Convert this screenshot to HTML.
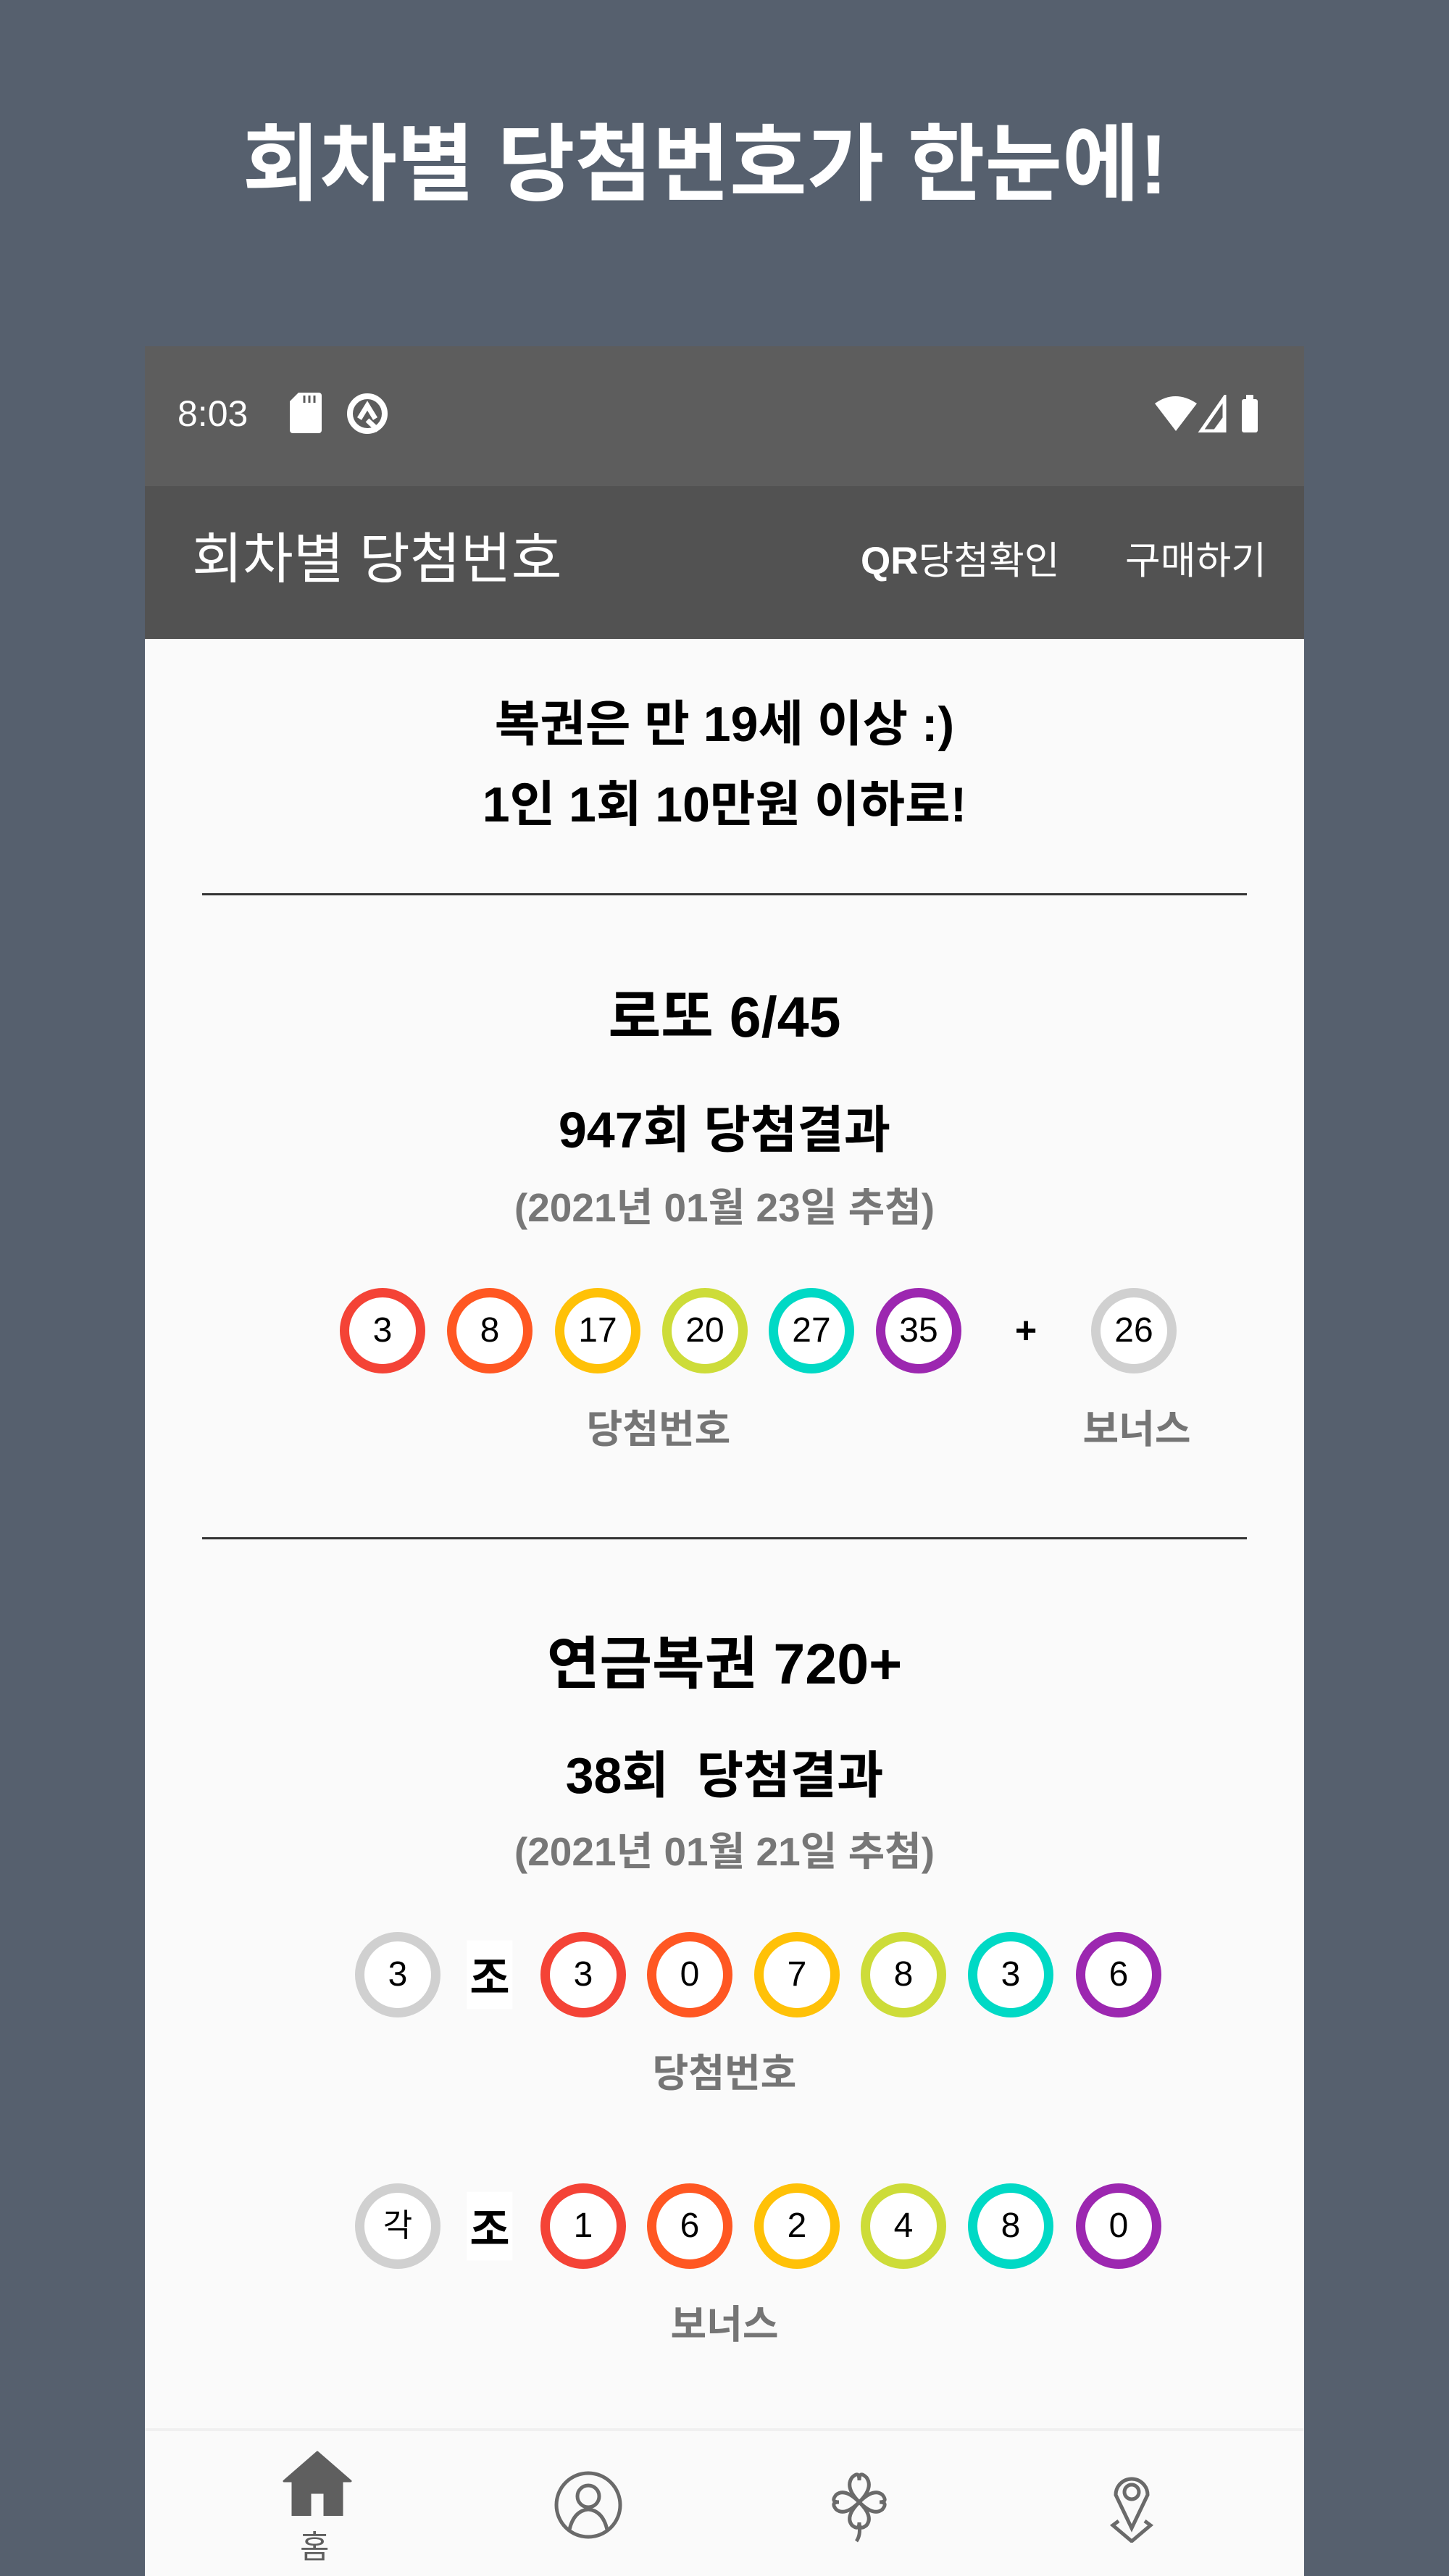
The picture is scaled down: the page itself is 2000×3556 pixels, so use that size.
<!DOCTYPE html>
<html><head><meta charset="utf-8"><style>
*{margin:0;padding:0;box-sizing:border-box}
body{width:2000px;height:3556px;background:#56606e;position:relative;overflow:hidden;font-family:"Liberation Sans","Noto Sans CJK KR",sans-serif}
.a{position:absolute;white-space:nowrap}
.c{position:absolute;left:200px;width:1600px;text-align:center;white-space:nowrap}
.ball{position:absolute;width:118px;height:118px;border-radius:50%;border:13px solid;background:#fff;text-align:center;line-height:92px;font-size:48px;color:#000;transform:translate(-50%,-50%)}
.r{border-color:#f44336}.o{border-color:#ff5722}.y{border-color:#ffc107}.l{border-color:#cddc39}.t{border-color:#00d9c5}.p{border-color:#9c27b0}.g{border-color:#d0d0d0}
.lbl{position:absolute;font-size:54px;color:#757575;font-weight:bold;transform:translate(-50%,-50%)}
</style></head><body>
<div class="a" style="left:-27px;width:2000px;text-align:center;top:160px;font-size:116px;font-weight:bold;color:#fff;line-height:134px">회차별 당첨번호가 한눈에!</div>
<div class="a" style="left:200px;top:478px;width:1600px;height:193px;background:#5d5d5d"></div>
<div class="a" style="left:245px;top:540px;font-size:50px;color:#fff;line-height:62px">8:03</div>
<svg class="a" style="left:400px;top:542px" width="44" height="56" viewBox="0 0 44 56"><path d="M12 0H40a4 4 0 0 1 4 4V52a4 4 0 0 1-4 4H4a4 4 0 0 1-4-4V12z" fill="#fff"/><path d="M20 4v10M27 4v10M34 4v10" stroke="#5d5d5d" stroke-width="3"/></svg>
<svg class="a" style="left:478px;top:542px" width="58" height="58" viewBox="0 0 58 58"><circle cx="29" cy="29" r="24" fill="none" stroke="#fff" stroke-width="8"/><path d="M18 36L29 18L40 36M29 38L44 52" fill="none" stroke="#fff" stroke-width="7"/></svg>
<svg class="a" style="left:1594px;top:545px" width="150" height="52" viewBox="0 0 150 52"><path d="M0 12Q28 -8 58 12L29 50z" fill="#fff"/><path d="M64 50L96 4V50z" fill="none" stroke="#fff" stroke-width="5"/><path d="M80 50L96 28V50z" fill="#fff"/><rect x="120" y="6" width="22" height="46" rx="3" fill="#fff"/><rect x="126" y="0" width="10" height="8" fill="#fff"/></svg>
<div class="a" style="left:200px;top:671px;width:1600px;height:211px;background:#525252"></div>
<div class="a" style="left:265px;top:728px;font-size:76px;color:#fff;line-height:90px">회차별 당첨번호</div>
<div class="a" style="left:1188px;top:744px;font-size:53px;color:#fff;line-height:62px"><b>QR</b>당첨확인</div>
<div class="a" style="left:1553px;top:744px;font-size:53px;color:#fff;line-height:62px">구매하기</div>
<div class="a" style="left:200px;top:882px;width:1600px;height:2470px;background:#fafafa"></div>
<div class="c" style="top:962px;font-size:68px;font-weight:bold;line-height:76px">복권은 만 19세 이상 :)</div>
<div class="c" style="top:1073px;font-size:68px;font-weight:bold;line-height:76px">1인 1회 10만원 이하로!</div>
<div class="a" style="left:279px;top:1233px;width:1442px;height:3px;background:#333"></div>
<div class="c" style="top:1360px;font-size:79px;font-weight:bold;line-height:88px">로또 6/45</div>
<div class="c" style="top:1521px;font-size:70px;font-weight:bold;line-height:78px">947회 당첨결과</div>
<div class="c" style="top:1637px;font-size:55px;font-weight:bold;color:#777;line-height:60px">(2021년 01월 23일 추첨)</div>
<div class="ball r" style="left:528px;top:1837px">3</div>
<div class="ball o" style="left:676px;top:1837px">8</div>
<div class="ball y" style="left:825px;top:1837px">17</div>
<div class="ball l" style="left:973px;top:1837px">20</div>
<div class="ball t" style="left:1120px;top:1837px">27</div>
<div class="ball p" style="left:1268px;top:1837px">35</div>
<div class="lbl" style="left:1416px;top:1837px;color:#000;font-size:52px">+</div>
<div class="ball g" style="left:1565px;top:1837px">26</div>
<div class="lbl" style="left:909px;top:1968px">당첨번호</div>
<div class="lbl" style="left:1569px;top:1968px">보너스</div>
<div class="a" style="left:279px;top:2122px;width:1442px;height:3px;background:#333"></div>
<div class="c" style="top:2253px;font-size:79px;font-weight:bold;line-height:88px">연금복권 720+</div>
<div class="c" style="top:2412px;font-size:70px;font-weight:bold;line-height:78px">38회&nbsp; 당첨결과</div>
<div class="c" style="top:2526px;font-size:55px;font-weight:bold;color:#777;line-height:60px">(2021년 01월 21일 추첨)</div>
<div class="ball g" style="left:549px;top:2726px">3</div>
<div class="lbl" style="left:676px;top:2726px;color:#000;font-size:60px;background:#fff;padding:4px">조</div>
<div class="ball r" style="left:805px;top:2726px">3</div>
<div class="ball o" style="left:952px;top:2726px">0</div>
<div class="ball y" style="left:1100px;top:2726px">7</div>
<div class="ball l" style="left:1247px;top:2726px">8</div>
<div class="ball t" style="left:1395px;top:2726px">3</div>
<div class="ball p" style="left:1544px;top:2726px">6</div>
<div class="lbl" style="left:1000px;top:2857px">당첨번호</div>
<div class="ball g" style="left:549px;top:3073px;font-size:44px">각</div>
<div class="lbl" style="left:676px;top:3073px;color:#000;font-size:60px;background:#fff;padding:4px">조</div>
<div class="ball r" style="left:805px;top:3073px">1</div>
<div class="ball o" style="left:952px;top:3073px">6</div>
<div class="ball y" style="left:1100px;top:3073px">2</div>
<div class="ball l" style="left:1247px;top:3073px">4</div>
<div class="ball t" style="left:1395px;top:3073px">8</div>
<div class="ball p" style="left:1544px;top:3073px">0</div>
<div class="lbl" style="left:1000px;top:3204px">보너스</div>
<div class="a" style="left:200px;top:3352px;width:1600px;height:204px;background:#fafafa;border-top:4px solid #f0f0f0"></div>
<svg class="a" style="left:390px;top:3383px" width="96" height="90" viewBox="0 0 96 90"><path d="M48 2L94 42H82V90H58V58H38V90H14V42H2z" fill="#5f5f5f" stroke="#5f5f5f" stroke-width="3" stroke-linejoin="round"/></svg>
<div class="a" style="left:414px;top:3492px;font-size:44px;color:#5f5f5f;line-height:50px">홈</div>
<svg class="a" style="left:764px;top:3410px" width="96" height="96" viewBox="0 0 96 96"><circle cx="48" cy="48" r="44" fill="none" stroke="#6a6a6a" stroke-width="5"/><circle cx="48" cy="36" r="15" fill="none" stroke="#6a6a6a" stroke-width="5"/><path d="M22 82Q28 56 48 54Q68 56 74 82" fill="none" stroke="#6a6a6a" stroke-width="5"/></svg>
<svg class="a" style="left:1146px;top:3410px" width="80" height="100" viewBox="0 0 80 100"><g fill="none" stroke="#6a6a6a" stroke-width="5"><path d="M40 44Q20 24 30 10Q40 0 40 14Q40 0 50 10Q60 24 40 44Z"/><path d="M40 44Q20 64 30 76Q40 84 40 72Q40 84 50 76Q60 64 40 44Z"/><path d="M40 44Q20 24 8 34Q0 44 12 44Q0 44 8 54Q20 64 40 44Z"/><path d="M40 44Q60 24 72 34Q80 44 68 44Q80 44 72 54Q60 64 40 44Z"/><path d="M40 76Q42 90 36 98"/></g></svg>
<svg class="a" style="left:1530px;top:3410px" width="64" height="100" viewBox="0 0 64 100"><g fill="none" stroke="#6a6a6a" stroke-width="5"><path d="M32 80L10 34A22 22 0 1 1 54 34Z"/><circle cx="32" cy="30" r="10"/><path d="M14 70L6 76L32 98L58 76L50 70"/></g></svg>
</body></html>
